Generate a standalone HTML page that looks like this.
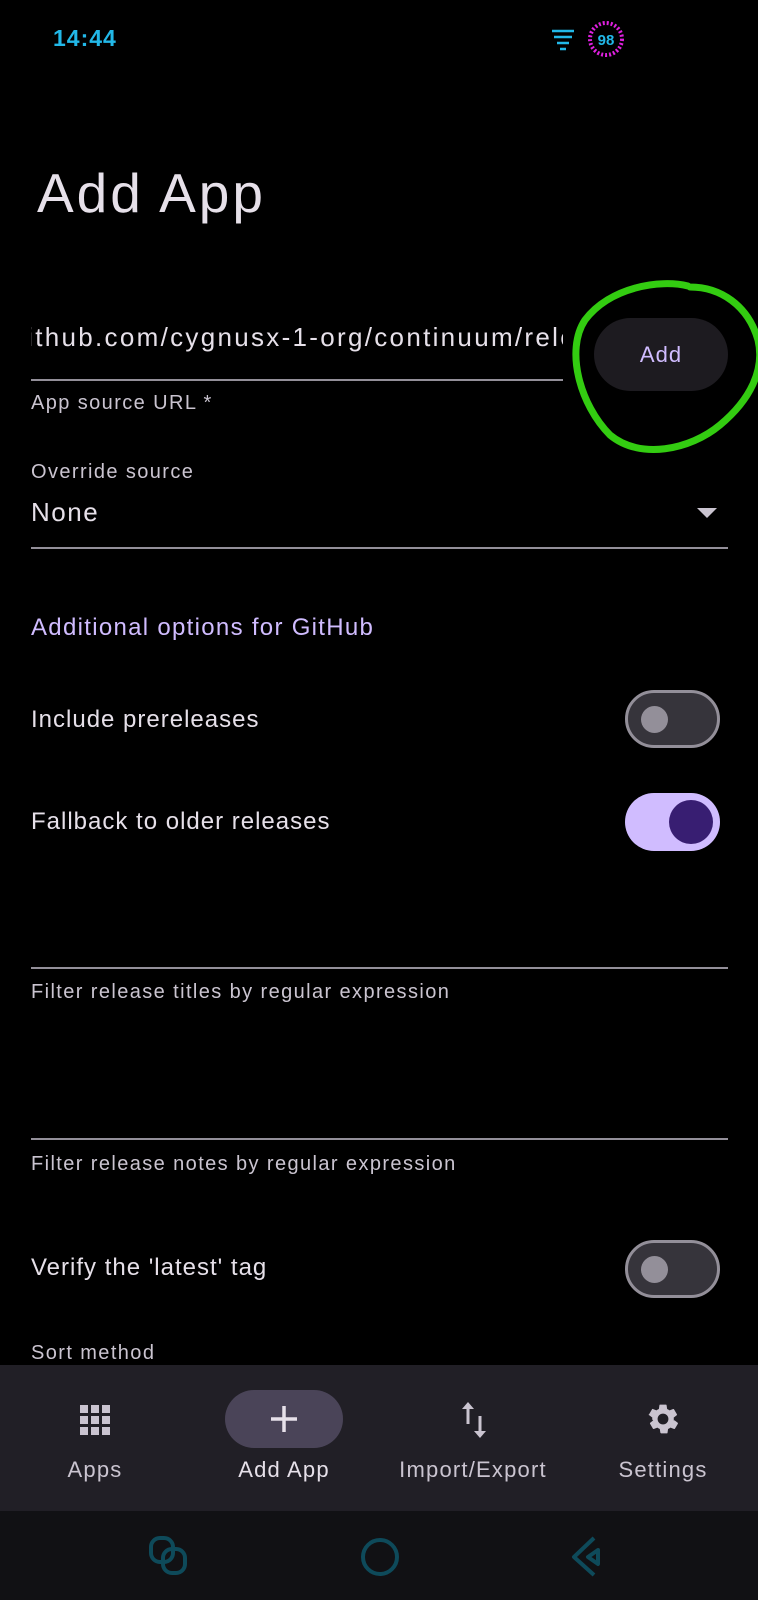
<!DOCTYPE html>
<html><head><meta charset="utf-8"><style>
*{margin:0;padding:0;box-sizing:border-box}
body{width:758px;height:1600px;background:#000;position:relative;overflow:hidden;font-family:"Liberation Sans",sans-serif;color:#e6e0e9}
.t{position:absolute;white-space:nowrap;line-height:1}
.line{position:absolute;height:2px;background:#938f99}
.sw{position:absolute;width:95px;height:58px;border-radius:29px}
.off{background:#36343b;border:3px solid #938f99}
.off i{position:absolute;left:13px;top:13px;width:27px;height:27px;border-radius:50%;background:#938f99}
.on{background:#d0bcff}
.on i{position:absolute;right:7px;top:7px;width:44px;height:44px;border-radius:50%;background:#381e72}
.lab{font-size:20px;color:#cac4d0;letter-spacing:1.4px}
.big{font-size:24px;letter-spacing:1px}
.nl{position:absolute;top:1458px;font-size:22px;color:#cac4d0;width:200px;text-align:center;line-height:24px;letter-spacing:1.2px}
</style></head><body>
<div class="t" style="left:53px;top:27px;font-size:23px;color:#22b8e8;font-weight:bold;letter-spacing:1px">14:44</div>
<svg style="position:absolute;left:550px;top:27px" width="26" height="26" viewBox="0 0 26 26"><g fill="none" stroke="#22b8e8" stroke-width="2.5"><path d="M2 4h22M4 10h18M7 16h12M10 22h6"/></g></svg>
<svg style="position:absolute;left:587px;top:20px" width="38" height="38" viewBox="0 0 38 38"><circle cx="19" cy="19" r="16" fill="none" stroke="#e020e0" stroke-width="4" stroke-dasharray="2 2"/><text x="19" y="25" font-size="15" font-weight="bold" text-anchor="middle" fill="#22b8e8" font-family="Liberation Sans">98</text></svg>

<div class="t" style="left:37px;top:166px;font-size:55px;letter-spacing:3px;color:#e6e0e9">Add App</div>

<div style="position:absolute;left:31px;top:318px;width:532px;height:40px;overflow:hidden"><div class="t" style="right:-14px;top:6px;font-size:26px;letter-spacing:2.3px;color:#e6e0e9">github.com/cygnusx-1-org/continuum/rele</div></div>
<div class="line" style="left:31px;top:379px;width:532px"></div>
<div class="t lab" style="left:31px;top:393px">App source URL *</div>
<div style="position:absolute;left:594px;top:318px;width:134px;height:73px;border-radius:37px;background:#1d1b20"></div>
<div class="t" style="left:594px;top:344px;width:134px;text-align:center;font-size:22px;letter-spacing:1px;color:#d0bcff">Add</div>
<svg style="position:absolute;left:560px;top:275px" width="198" height="190" viewBox="0 0 198 190"><path d="M128 11 C 100 4, 50 12, 25 45 C 5 75, 20 130, 50 160 C 80 185, 130 175, 160 150 C 190 125, 205 95, 198 65 C 188 30, 160 12, 130 12" fill="none" stroke="#33cc11" stroke-width="7" stroke-linecap="round"/></svg>

<div class="t lab" style="left:31px;top:462px">Override source</div>
<div class="t" style="left:31px;top:499px;font-size:26px;letter-spacing:1.5px">None</div>
<svg style="position:absolute;left:697px;top:508px" width="20" height="12"><path d="M0 0h20L10 10z" fill="#cac4d0"/></svg>
<div class="line" style="left:31px;top:547px;width:697px"></div>

<div class="t" style="left:31px;top:616px;font-size:24px;letter-spacing:1.3px;color:#d0bcff">Additional options for GitHub</div>

<div class="t big" style="left:31px;top:708px">Include prereleases</div>
<div class="sw off" style="left:625px;top:690px"><i></i></div>
<div class="t big" style="left:31px;top:810px">Fallback to older releases</div>
<div class="sw on" style="left:625px;top:793px"><i></i></div>

<div class="line" style="left:31px;top:967px;width:697px"></div>
<div class="t lab" style="left:31px;top:982px">Filter release titles by regular expression</div>
<div class="line" style="left:31px;top:1138px;width:697px"></div>
<div class="t lab" style="left:31px;top:1154px">Filter release notes by regular expression</div>

<div class="t big" style="left:31px;top:1256px">Verify the 'latest' tag</div>
<div class="sw off" style="left:625px;top:1240px"><i></i></div>
<div class="t lab" style="left:31px;top:1343px">Sort method</div>

<div style="position:absolute;left:0;top:1365px;width:758px;height:146px;background:#211f26"></div>
<svg style="position:absolute;left:79px;top:1404px" width="32" height="32" viewBox="0 0 32 32" fill="#cac4d0"><rect x="1" y="1" width="8" height="8"/><rect x="12" y="1" width="8" height="8"/><rect x="23" y="1" width="8" height="8"/><rect x="1" y="12" width="8" height="8"/><rect x="12" y="12" width="8" height="8"/><rect x="23" y="12" width="8" height="8"/><rect x="1" y="23" width="8" height="8"/><rect x="12" y="23" width="8" height="8"/><rect x="23" y="23" width="8" height="8"/></svg>
<div style="position:absolute;left:225px;top:1390px;width:118px;height:58px;border-radius:29px;background:#4a4458"></div>
<svg style="position:absolute;left:270px;top:1405px" width="28" height="28"><path d="M14 1v26M1 14h26" stroke="#e6e0e9" stroke-width="3.5"/></svg>
<svg style="position:absolute;left:459px;top:1400px" width="30" height="40" viewBox="0 0 30 40"><g stroke="#cac4d0" stroke-width="3" fill="none"><path d="M9 6v18M21 16v18"/></g><path d="M3 9l6-7 6 7z M15 31l6 7 6-7z" fill="#cac4d0"/></svg>
<svg style="position:absolute;left:645px;top:1401px" width="36" height="36" viewBox="0 0 24 24"><path fill="#cac4d0" d="M19.14 12.94c.04-.3.06-.61.06-.94 0-.32-.02-.64-.07-.94l2.03-1.58a.49.49 0 0 0 .12-.61l-1.920-3.32a.49.49 0 0 0-.59-.22l-2.39.96c-.5-.38-1.030-.7-1.62-.94l-.36-2.54a.48.48 0 0 0-.48-.41h-3.84c-.24 0-.43.17-.47.41l-.36 2.54c-.59.24-1.13.57-1.62.94l-2.39-.96a.48.48 0 0 0-.59.22L2.74 8.87c-.12.21-.8.47.12.61l2.03 1.58c-.05.3-.09.63-.09.94s.2.64.7.94l-2.030 1.58a.49.49 0 0 0-.12.61l1.92 3.32c.12.22.37.29.59.22l2.39-.96c.5.38 1.03.7 1.62.94l.36 2.54c.5.24.24.41.48.41h3.84c.24 0 .44-.17.47-.41l.36-2.54c.59-.24 1.13-.56 1.62-.94l2.39.96c.22.08.47 0 .59-.22l1.92-3.32c.12-.22.07-.47-.12-.61l-2.01-1.58zM12 15.6A3.6 3.6 0 1 1 12 8.4a3.6 3.6 0 0 1 0 7.2z"/></svg>
<div class="nl" style="left:-5px">Apps</div>
<div class="nl" style="left:184px;color:#e6e0e9">Add App</div>
<div class="nl" style="left:373px">Import/Export</div>
<div class="nl" style="left:563px">Settings</div>

<div style="position:absolute;left:0;top:1511px;width:758px;height:89px;background:#111114"></div>
<svg style="position:absolute;left:148px;top:1535px" width="42" height="42"><g fill="none" stroke="#0e4a5a" stroke-width="4"><rect x="3" y="3" width="22" height="24" rx="9"/><rect x="15" y="14" width="22" height="24" rx="9"/></g></svg>
<svg style="position:absolute;left:358px;top:1535px" width="44" height="44"><circle cx="22" cy="22" r="17" fill="none" stroke="#0e4a5a" stroke-width="4"/></svg>
<svg style="position:absolute;left:568px;top:1535px" width="40" height="42"><path d="M26 3L6 22l20 18M30 15l-10 7 10 7z" fill="none" stroke="#0e4a5a" stroke-width="4" stroke-linejoin="round"/></svg>
</body></html>
